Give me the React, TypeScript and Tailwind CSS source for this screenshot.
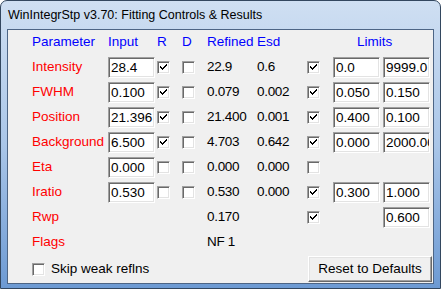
import React from 'react';

type Row = {
  name: string;
  input?: string;
  r?: boolean;
  d?: boolean;
  refined?: string;
  esd?: string;
  lim?: boolean;
  lo?: string;
  hi?: string;
};

const rows: Row[] = [
  { name: 'Intensity', input: '28.4', r: true, d: false, refined: '22.9', esd: '0.6', lim: true, lo: '0.0', hi: '9999.0' },
  { name: 'FWHM', input: '0.100', r: true, d: false, refined: '0.079', esd: '0.002', lim: true, lo: '0.050', hi: '0.150' },
  { name: 'Position', input: '21.396', r: true, d: false, refined: '21.400', esd: '0.001', lim: true, lo: '0.400', hi: '0.100' },
  { name: 'Background', input: '6.500', r: true, d: false, refined: '4.703', esd: '0.642', lim: true, lo: '0.000', hi: '2000.000' },
  { name: 'Eta', input: '0.000', r: false, d: false, refined: '0.000', esd: '0.000', lim: false },
  { name: 'Iratio', input: '0.530', r: false, d: false, refined: '0.530', esd: '0.000', lim: true, lo: '0.300', hi: '1.000' },
  { name: 'Rwp', refined: '0.170', lim: true, hi: '0.600' },
  { name: 'Flags', refined: 'NF 1' },
];

function Check({ on }: { on: boolean }) {
  return (
    <div className="w-[13px] h-[13px] bg-white border border-t-[#a0a0a0] border-l-[#a0a0a0] border-r-white border-b-white shadow-[inset_1px_1px_0_#696969,inset_-1px_-1px_0_#e3e3e3] flex items-center justify-center">
      {on && (
        <svg width="7" height="7" viewBox="0 0 7 7">
          <path d="M0 2h1v1h1v1h1V3h1V2h1V1h1V0h1v2H6v1H5v1H4v1H3v1H2V5H1V4H0z" fill="#000" />
        </svg>
      )}
    </div>
  );
}

function Box({ value }: { value: string }) {
  return (
    <div className="w-[47px] h-[21px] bg-white border border-t-[#a0a0a0] border-l-[#a0a0a0] border-r-white border-b-white shadow-[inset_1px_1px_0_#696969,inset_-1px_-1px_0_#e3e3e3] pl-[2px] overflow-hidden whitespace-nowrap leading-[19px] text-black">
      {value}
    </div>
  );
}

export default function App() {
  return (
    <div
      className="w-[441px] h-[289px] rounded-t-[7px] border border-[#33475f] bg-gradient-to-b from-[#cfdff2] via-[#aac6e8] to-[#6d9ad3] flex flex-col overflow-hidden"
      style={{ fontFamily: '"Liberation Sans", Arial, sans-serif' }}
    >
      {/* title bar */}
      <div className="h-[28px] pl-[7px] pt-[1px] flex items-center text-[12.5px] text-black">
        WinIntegrStp v3.70: Fitting Controls &amp; Results
      </div>

      {/* client area */}
      <div className="ml-[6px] w-[427px] h-[255px] border border-[#4d6585] bg-[#f0f0f0] text-[13.5px] flex flex-col">
        <div className="pl-[24px] grid grid-cols-[76px_49px_25px_25px_50px_50px_26px_50px_47px] auto-rows-[25px] items-center">
          <div className="text-[#0000ff]">Parameter</div>
          <div className="text-[#0000ff]">Input</div>
          <div className="text-[#0000ff]">R</div>
          <div className="text-[#0000ff]">D</div>
          <div className="text-[#0000ff]">Refined</div>
          <div className="text-[#0000ff]">Esd</div>
          <div className="col-span-3 pl-[50px] text-[#0000ff]">Limits</div>

          {rows.map((r) => (
            <React.Fragment key={r.name}>
              <div className="text-[#ff0000]">{r.name}</div>
              <div>{r.input !== undefined && <Box value={r.input} />}</div>
              <div>{r.r !== undefined && <Check on={r.r} />}</div>
              <div>{r.d !== undefined && <Check on={r.d} />}</div>
              <div className="text-black tracking-[-0.3px]">{r.refined}</div>
              <div className="text-black tracking-[-0.3px]">{r.esd}</div>
              <div>{r.lim !== undefined && <Check on={r.lim} />}</div>
              <div>{r.lo !== undefined && <Box value={r.lo} />}</div>
              <div>{r.hi !== undefined && <Box value={r.hi} />}</div>
            </React.Fragment>
          ))}
        </div>

        <div className="flex-1 pl-[24px] pr-[1px] flex items-center justify-between">
          <div className="flex items-center gap-[6px] text-black">
            <Check on={false} />
            <span>Skip weak reflns</span>
          </div>
          <button className="w-[124px] h-[26px] bg-[#f0f0f0] text-black border border-t-white border-l-white border-r-[#696969] border-b-[#696969] shadow-[inset_-1px_-1px_0_#a0a0a0,inset_1px_1px_0_#e3e3e3] text-[13.5px]">
            Reset to Defaults
          </button>
        </div>
      </div>
    </div>
  );
}
